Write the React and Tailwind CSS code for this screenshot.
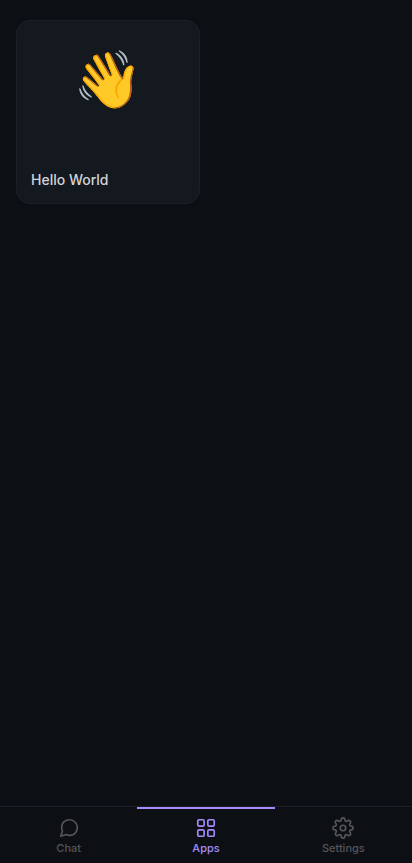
import { useState } from 'react'

const APPS = [{ id: 'hello-world', name: 'Hello World', icon: '👋' }]

function Icon({ children }) {
  return (
    <svg
      className="size-[22px]"
      viewBox="0 0 24 24"
      fill="none"
      stroke="currentColor"
      strokeWidth="1.8"
      strokeLinecap="round"
      strokeLinejoin="round"
      aria-hidden="true"
    >
      {children}
    </svg>
  )
}

function ChatIcon() {
  return (
    <Icon>
      <path d="M21 11.5a8.38 8.38 0 0 1-.9 3.8 8.5 8.5 0 0 1-7.6 4.7 8.38 8.38 0 0 1-3.8-.9L3 21l1.9-5.7a8.38 8.38 0 0 1-.9-3.8 8.5 8.5 0 0 1 4.7-7.6 8.38 8.38 0 0 1 3.8-.9h.5a8.48 8.48 0 0 1 8 8v.5z" />
    </Icon>
  )
}

function AppsIcon() {
  return (
    <Icon>
      <rect x="3" y="3" width="7" height="7" rx="1.5" />
      <rect x="14" y="3" width="7" height="7" rx="1.5" />
      <rect x="3" y="14" width="7" height="7" rx="1.5" />
      <rect x="14" y="14" width="7" height="7" rx="1.5" />
    </Icon>
  )
}

function SettingsIcon() {
  return (
    <Icon>
      <circle cx="12" cy="12" r="3" />
      <path d="M19.4 15a1.65 1.65 0 0 0 .33 1.82l.06.06a2 2 0 0 1 0 2.83 2 2 0 0 1-2.83 0l-.06-.06a1.65 1.65 0 0 0-1.82-.33 1.65 1.65 0 0 0-1 1.51V21a2 2 0 0 1-2 2 2 2 0 0 1-2-2v-.09A1.65 1.65 0 0 0 9 19.4a1.65 1.65 0 0 0-1.82.33l-.06.06a2 2 0 0 1-2.83 0 2 2 0 0 1 0-2.83l.06-.06a1.65 1.65 0 0 0 .33-1.82 1.65 1.65 0 0 0-1.51-1H3a2 2 0 0 1-2-2 2 2 0 0 1 2-2h.09A1.65 1.65 0 0 0 4.6 9a1.65 1.65 0 0 0-.33-1.82l-.06-.06a2 2 0 0 1 0-2.83 2 2 0 0 1 2.83 0l.06.06a1.65 1.65 0 0 0 1.82.33H9a1.65 1.65 0 0 0 1-1.51V3a2 2 0 0 1 2-2 2 2 0 0 1 2 2v.09a1.65 1.65 0 0 0 1 1.51 1.65 1.65 0 0 0 1.82-.33l.06-.06a2 2 0 0 1 2.83 0 2 2 0 0 1 0 2.83l-.06.06a1.65 1.65 0 0 0-.33 1.82V9a1.65 1.65 0 0 0 1.51 1H21a2 2 0 0 1 2 2 2 2 0 0 1-2 2h-.09a1.65 1.65 0 0 0-1.51 1z" />
    </Icon>
  )
}

const TABS = [
  { id: 'chat', label: 'Chat', icon: ChatIcon },
  { id: 'apps', label: 'Apps', icon: AppsIcon },
  { id: 'settings', label: 'Settings', icon: SettingsIcon },
]

function AppCard({ app }) {
  return (
    <button
      type="button"
      className="flex aspect-square flex-col rounded-[14px] border border-[#1c2026] bg-[#14191f] p-3.5 text-left"
    >
      <span className="flex w-full flex-1 items-start justify-center pt-4 text-[56px] leading-none">
        {app.icon}
      </span>
      <span className="text-sm leading-[18px] font-medium text-[#d2d3d6]">{app.name}</span>
    </button>
  )
}

function TabBar({ active, onChange }) {
  return (
    <nav className="flex h-[57px] border-t border-[#1c2026] bg-[#0c1014]">
      {TABS.map(({ id, label, icon: TabIcon }) => {
        const isActive = id === active
        return (
          <button
            key={id}
            type="button"
            aria-current={isActive ? 'page' : undefined}
            onClick={() => onChange(id)}
            className={`flex flex-1 flex-col items-center justify-center gap-0.5 border-t-2 text-[11px] leading-[14px] font-medium ${
              isActive ? 'border-[#a78bfa] text-[#a78bfa]' : 'border-transparent text-[#55555b]'
            }`}
          >
            <TabIcon />
            {label}
          </button>
        )
      })}
    </nav>
  )
}

export default function App() {
  const [tab, setTab] = useState('apps')

  return (
    <div className="flex h-dvh flex-col bg-[#0c1014] font-['Inter',sans-serif]">
      <main className="flex-1 overflow-y-auto px-4 py-5">
        {tab === 'apps' && (
          <div className="grid grid-cols-2 gap-3">
            {APPS.map((app) => (
              <AppCard key={app.id} app={app} />
            ))}
          </div>
        )}
      </main>
      <TabBar active={tab} onChange={setTab} />
    </div>
  )
}
